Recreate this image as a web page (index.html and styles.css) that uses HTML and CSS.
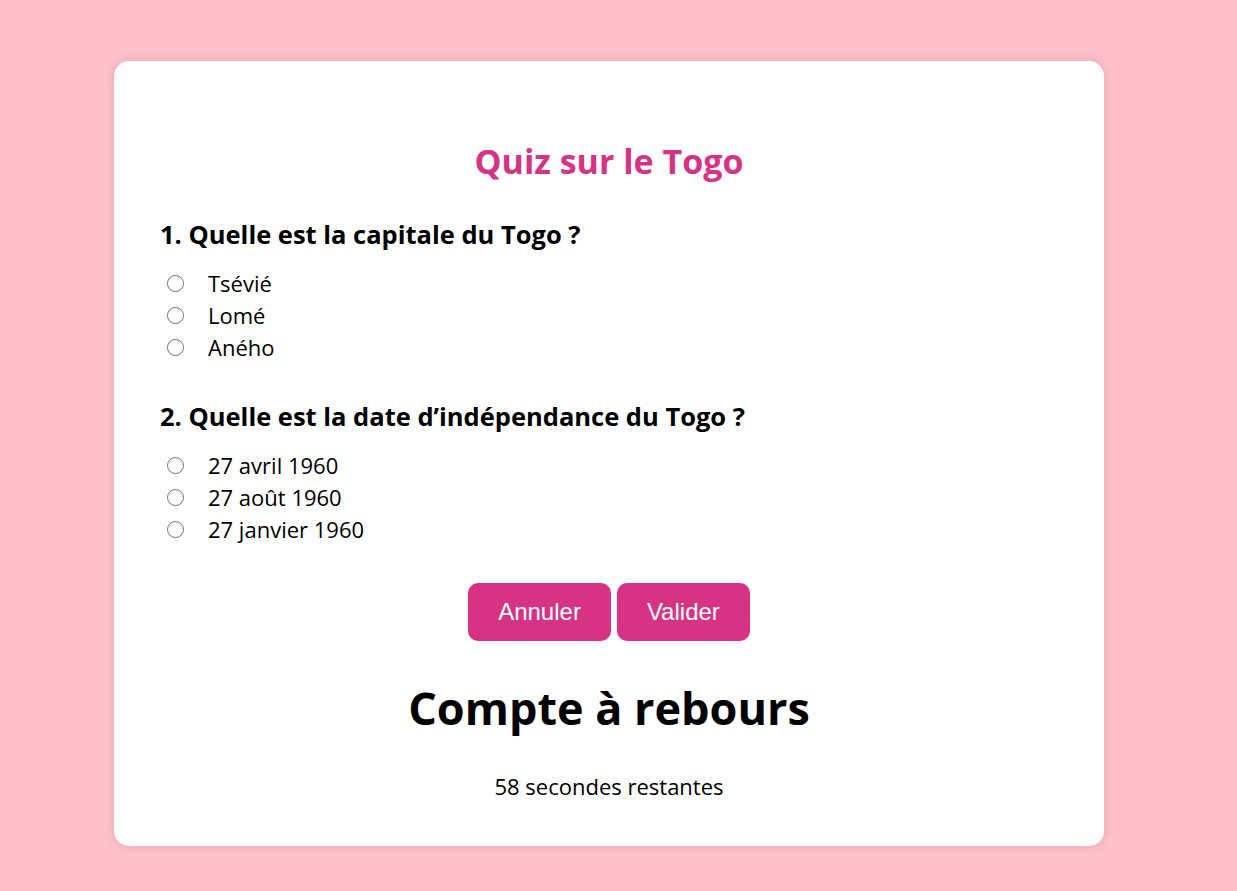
FILE: index.html
```html
<!DOCTYPE html>
<html lang="fr">
<head>
    <meta charset="UTF-8">
    <meta name="viewport" content="width=device-width, initial-scale=1.0">
    <title>Quiz sur le Togo</title>
    <link rel="stylesheet" href="styles.css">
</head>
<body>

    <div class="container">
        <h1 class="titre">Quiz sur le Togo</h1>

        <form id="quiz-form">
            <div class="question">
                <h3>1. Quelle est la capitale du Togo ?</h3>
                <label><input type="radio" name="q1" value="tsevie"> Tsévié</label>
                <label><input type="radio" name="q1" value="lome"> Lomé</label>
                <label><input type="radio" name="q1" value="aneho"> Aného</label>
            </div>

            <div class="question">
                <h3>2. Quelle est la date d’indépendance du Togo ?</h3>
                <label><input type="radio" name="q2" value="avril"> 27 avril 1960</label>
                <label><input type="radio" name="q2" value="aout"> 27 août 1960</label>
                <label><input type="radio" name="q2" value="janvier"> 27 janvier 1960</label>
            </div>

            <div class="boutons">
                <button type="reset">Annuler</button>
                <button type="submit">Valider</button>
            </div>
        </form>

        <h2 class="compteur">Compte à rebours</h2>
        <p id="temps">58 secondes restantes</p>
    </div>

</body>
</html>
```

FILE: styles.css
```css
/* Page du quiz */
body {
    margin: 0;
    padding: 61px 133px 45px 114px;
    background-color: pink;
    font-family: "Segoe UI", "Open Sans", sans-serif;
    color: #000;
}
.container {
    background-color: #fff;
    border-radius: 15px;
    box-shadow: 0 0 12px rgba(0, 0, 0, 0.12);
    padding: 80px 46px 45px 46px;
}
.titre {
    text-align: center;
    color: #d63384;
    font-size: 34px;
    line-height: 40px;
    margin: 0 0 38px 0;
}
.question {
    margin-top: 38px;
}
.question:first-child {
    margin-top: 0;
}
.question h3 {
    font-size: 25.5px;
    line-height: 30px;
    margin: 0 0 18px 0;
}
.question label {
    display: flex;
    align-items: center;
    font-size: 22px;
    line-height: 32px;
}
.question input[type="radio"] {
    appearance: none;
    width: 17px;
    height: 17px;
    border: 1.5px solid #6e6e6e;
    border-radius: 50%;
    margin: 0 24px 0 7px;
    background: #fff;
}
.question input[type="radio"]:checked {
    border: 5px solid #d63384;
}
.boutons {
    display: flex;
    justify-content: center;
    gap: 6px;
    margin-top: 38px;
}
button {
    background-color: #d63384;
    color: white;
    border: none;
    border-radius: 10px;
    padding: 15px 30px;
    font-family: "Liberation Sans", Arial, sans-serif;
    font-size: 24px;
    cursor: pointer;
}
.compteur {
    text-align: center;
    font-size: 45px;
    line-height: 50px;
    margin: 42px 0 0 0;
}
#temps {
    text-align: center;
    font-size: 22px;
    margin: 38px 0 0 0;
}
```
